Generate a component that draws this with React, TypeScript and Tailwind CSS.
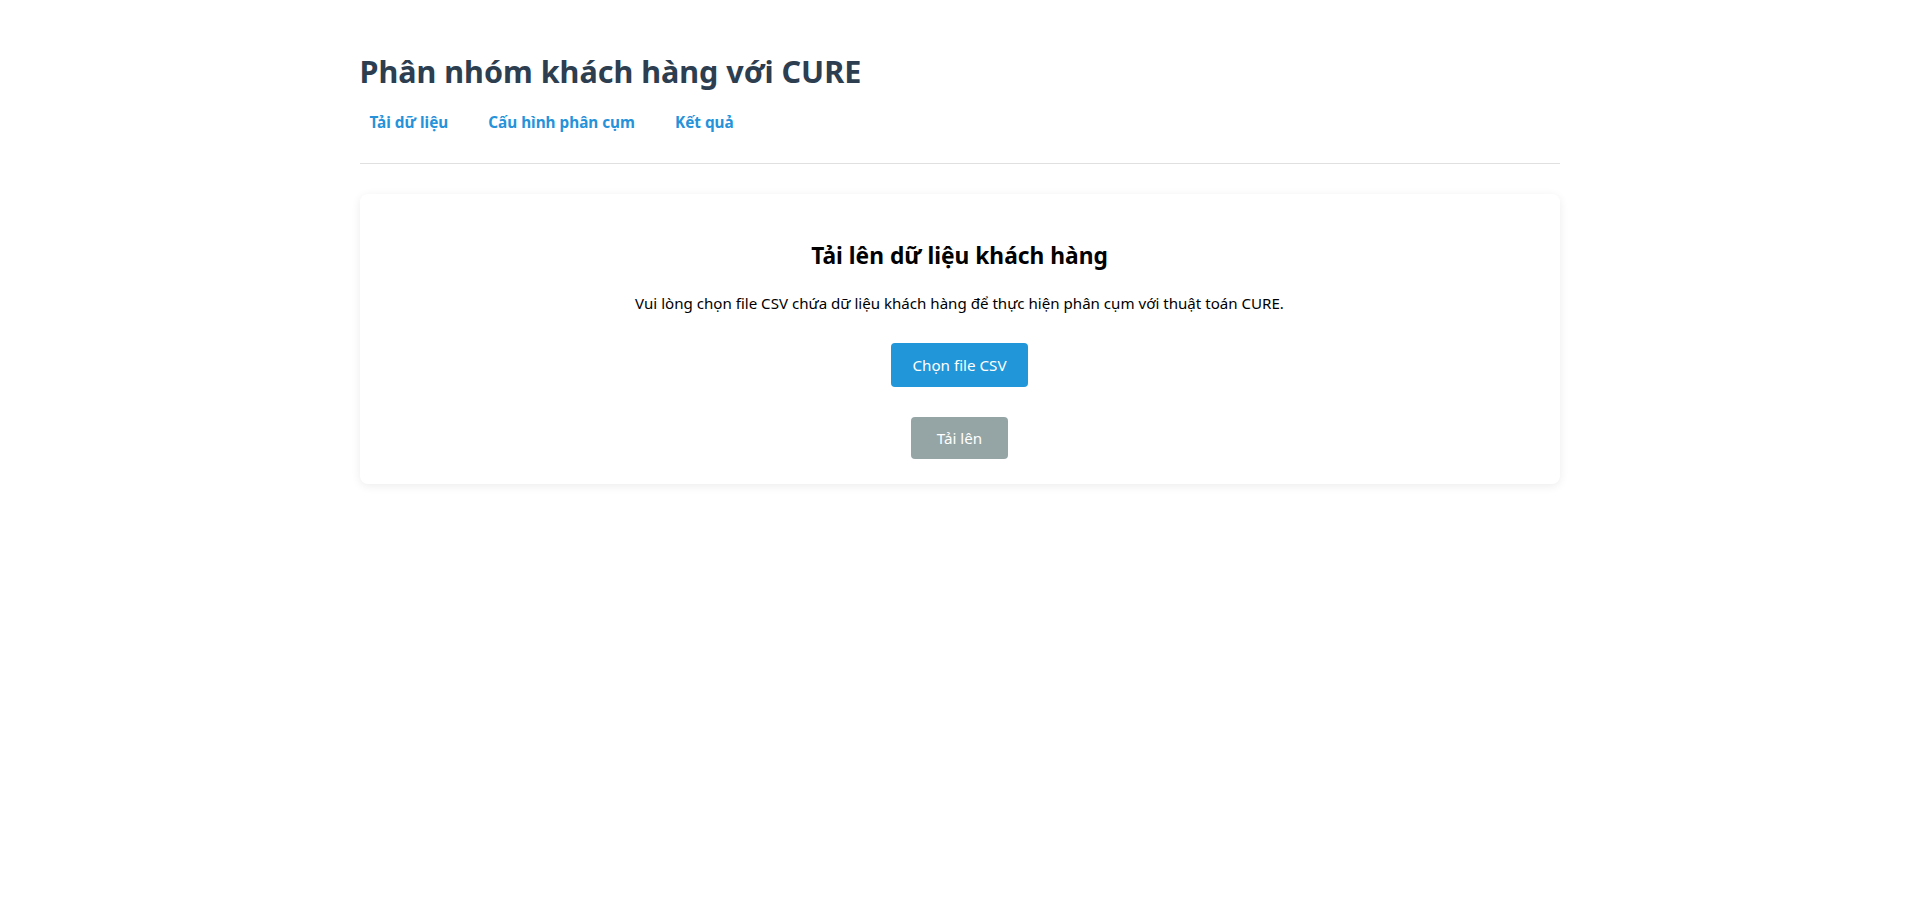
export default function App() {
  return (
    <div className="min-h-screen bg-white" style={{ fontFamily: '"Noto Sans", "Open Sans", sans-serif' }}>
      <div className="mx-auto w-[1200px] pt-[53px]">
        <h1 className="text-[30.5px] leading-[36px] font-bold text-[#2c3e50]">Phân nhóm khách hàng với CURE</h1>
        <nav className="mt-[13px] flex gap-[20px] pb-[21px] border-b border-[#e0e0e0]">
          <a className="px-[10px] py-[10px] text-[15.3px] leading-[20px] font-bold text-[#2592da]">Tải dữ liệu</a>
          <a className="px-[10px] py-[10px] text-[15.3px] leading-[20px] font-bold text-[#2592da]">Cấu hình phân cụm</a>
          <a className="px-[10px] py-[10px] text-[15.3px] leading-[20px] font-bold text-[#2592da]">Kết quả</a>
        </nav>
        <div className="mt-[30px] rounded-[8px] bg-white shadow-[0_2px_10px_rgba(0,0,0,0.08)] pt-[49px] pb-[25px] flex flex-col items-center">
          <h2 className="text-[22.75px] leading-[26px] font-bold text-black">Tải lên dữ liệu khách hàng</h2>
          <p className="mt-[22px] text-[15.1px] leading-[24px] text-black">Vui lòng chọn file CSV chứa dữ liệu khách hàng để thực hiện phân cụm với thuật toán CURE.</p>
          <button className="mt-[28px] h-[44px] px-[21px] rounded-[4px] bg-[#2196d8] text-white text-[15.2px]">Chọn file CSV</button>
          <button className="mt-[30px] h-[42px] px-[26px] rounded-[4px] bg-[#95a5a6] text-white text-[15.2px]">Tải lên</button>
        </div>
      </div>
    </div>
  );
}
